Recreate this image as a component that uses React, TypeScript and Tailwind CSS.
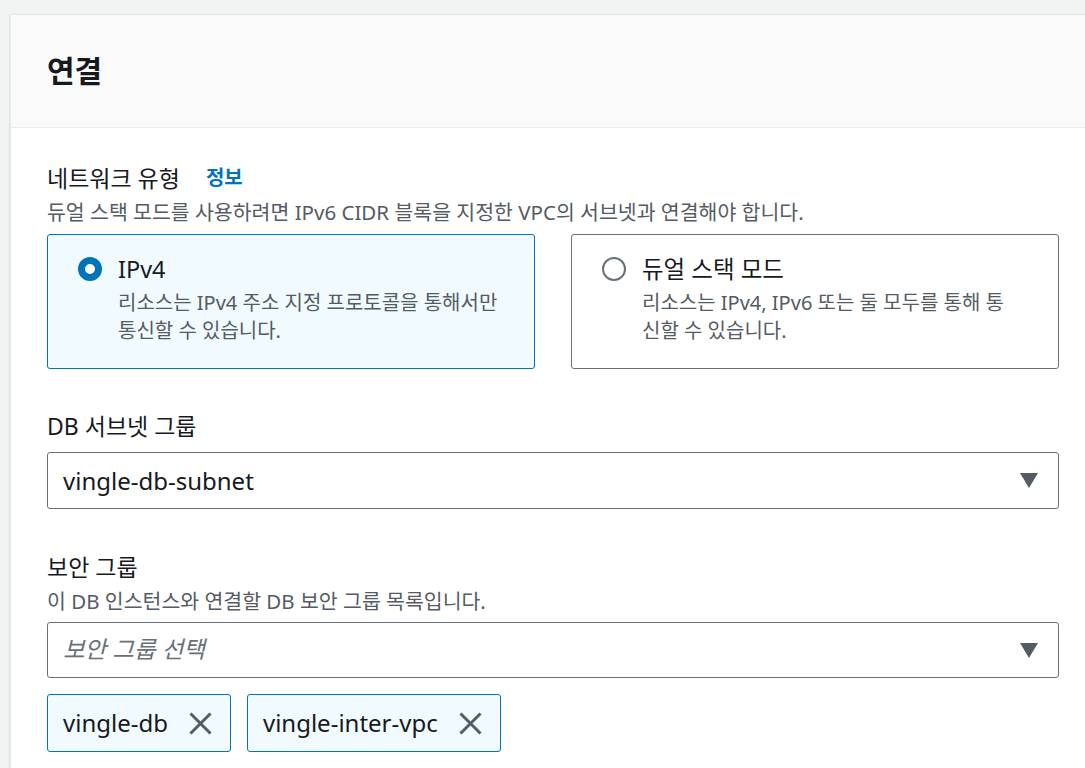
import { useState } from "react";

type NetType = "ipv4" | "dual";

const options = [
  {
    value: "ipv4" as NetType,
    label: "IPv4",
    lines: ["리소스는 IPv4 주소 지정 프로토콜을 통해서만", "통신할 수 있습니다."],
  },
  {
    value: "dual" as NetType,
    label: "듀얼 스택 모드",
    lines: ["리소스는 IPv4, IPv6 또는 둘 모두를 통해 통", "신할 수 있습니다."],
  },
];

function Caret() {
  return (
    <svg width="18" height="15" viewBox="0 0 18 15" className="shrink-0">
      <polygon points="0,0 18,0 9,15" fill="#545b64" />
    </svg>
  );
}

function CloseIcon() {
  return (
    <svg width="23" height="23" viewBox="0 0 23 23" className="shrink-0">
      <path d="M1.5 1.5 L21.5 21.5 M21.5 1.5 L1.5 21.5" stroke="#545b64" strokeWidth="3" fill="none" />
    </svg>
  );
}

export default function App() {
  const [netType, setNetType] = useState<NetType>("ipv4");
  const tokens = ["vingle-db", "vingle-inter-vpc"];

  return (
    <div className="w-[1085px] h-[768px] overflow-hidden bg-[#f2f3f3] pt-[14px] pl-[10px] font-['Noto_Sans','Noto_Sans_CJK_KR',sans-serif] text-[#16191f]">
      <div className="w-[1120px] bg-white border border-[#e5e8e8] shadow-[0_1px_2px_rgba(0,28,36,0.15)]">
        {/* Header */}
        <div className="h-[113px] flex items-center pl-[36px] bg-[#fafafa] border-b border-[#eaeded]">
          <h2 className="text-[30px] font-bold leading-[38px]">연결</h2>
        </div>

        {/* Body */}
        <div className="pl-[36px] pt-[35px] pb-[40px] w-[1048px]">
          {/* Network type */}
          <div className="flex items-center gap-[26px] text-[23px] leading-[30px]">
            <span>네트워크 유형</span>
            <span className="text-[#0073bb] font-bold text-[20px]">정보</span>
          </div>
          <p className="mt-[6px] text-[20.5px] leading-[26px] text-[#545b64] whitespace-nowrap">
            듀얼 스택 모드를 사용하려면 IPv6 CIDR 블록을 지정한 VPC의 서브넷과 연결해야 합니다.
          </p>

          <div className="mt-[9px] grid grid-cols-2 gap-[36px] w-[1012px]">
            {options.map((o) => {
              const selected = netType === o.value;
              return (
                <label
                  key={o.value}
                  onClick={() => setNetType(o.value)}
                  className={
                    "h-[135px] rounded-[3px] border pl-[30px] pt-[19px] cursor-pointer " +
                    (selected ? "border-[#0073bb] bg-[#f1faff]" : "border-[#687078] bg-white")
                  }
                >
                  <div className="flex items-center h-[30px]">
                    {selected ? (
                      <span className="w-[24px] h-[24px] rounded-full border-[7px] border-[#0073bb] bg-white shrink-0" />
                    ) : (
                      <span className="w-[24px] h-[24px] rounded-full border-2 border-[#687078] bg-white shrink-0" />
                    )}
                    <span className="ml-[16px] text-[23.5px] leading-[30px]">{o.label}</span>
                  </div>
                  <div className="mt-[5px] pl-[40px] text-[20px] leading-[28px] text-[#545b64]">
                    {o.lines.map((l) => (
                      <div key={l} className="whitespace-nowrap">
                        {l}
                      </div>
                    ))}
                  </div>
                </label>
              );
            })}
          </div>

          {/* DB subnet group */}
          <div className="mt-[42px] text-[23px] leading-[30px]">DB 서브넷 그룹</div>
          <div className="mt-[11px] w-[1012px] h-[57px] rounded-[3px] border border-[#687078] flex items-center justify-between pl-[15px] pr-[20px]">
            <span className="text-[24px]">vingle-db-subnet</span>
            <Caret />
          </div>

          {/* Security group */}
          <div className="mt-[43px] text-[23px] leading-[30px]">보안 그룹</div>
          <p className="mt-[6px] text-[20.5px] leading-[26px] text-[#545b64]">
            이 DB 인스턴스와 연결할 DB 보안 그룹 목록입니다.
          </p>
          <div className="mt-[8px] w-[1012px] h-[56px] rounded-[3px] border border-[#687078] flex items-center justify-between pl-[15px] pr-[20px]">
            <span className="text-[23.5px] italic text-[#687078]">보안 그룹 선택</span>
            <Caret />
          </div>

          <div className="mt-[16px] flex gap-[16px]">
            {tokens.map((t) => (
              <div
                key={t}
                className="h-[58px] rounded-[3px] border border-[#0073bb] bg-[#f1faff] flex items-center pl-[15px] pr-[18px] gap-[21px]"
              >
                <span className="text-[24px]">{t}</span>
                <CloseIcon />
              </div>
            ))}
          </div>
        </div>
      </div>
    </div>
  );
}
